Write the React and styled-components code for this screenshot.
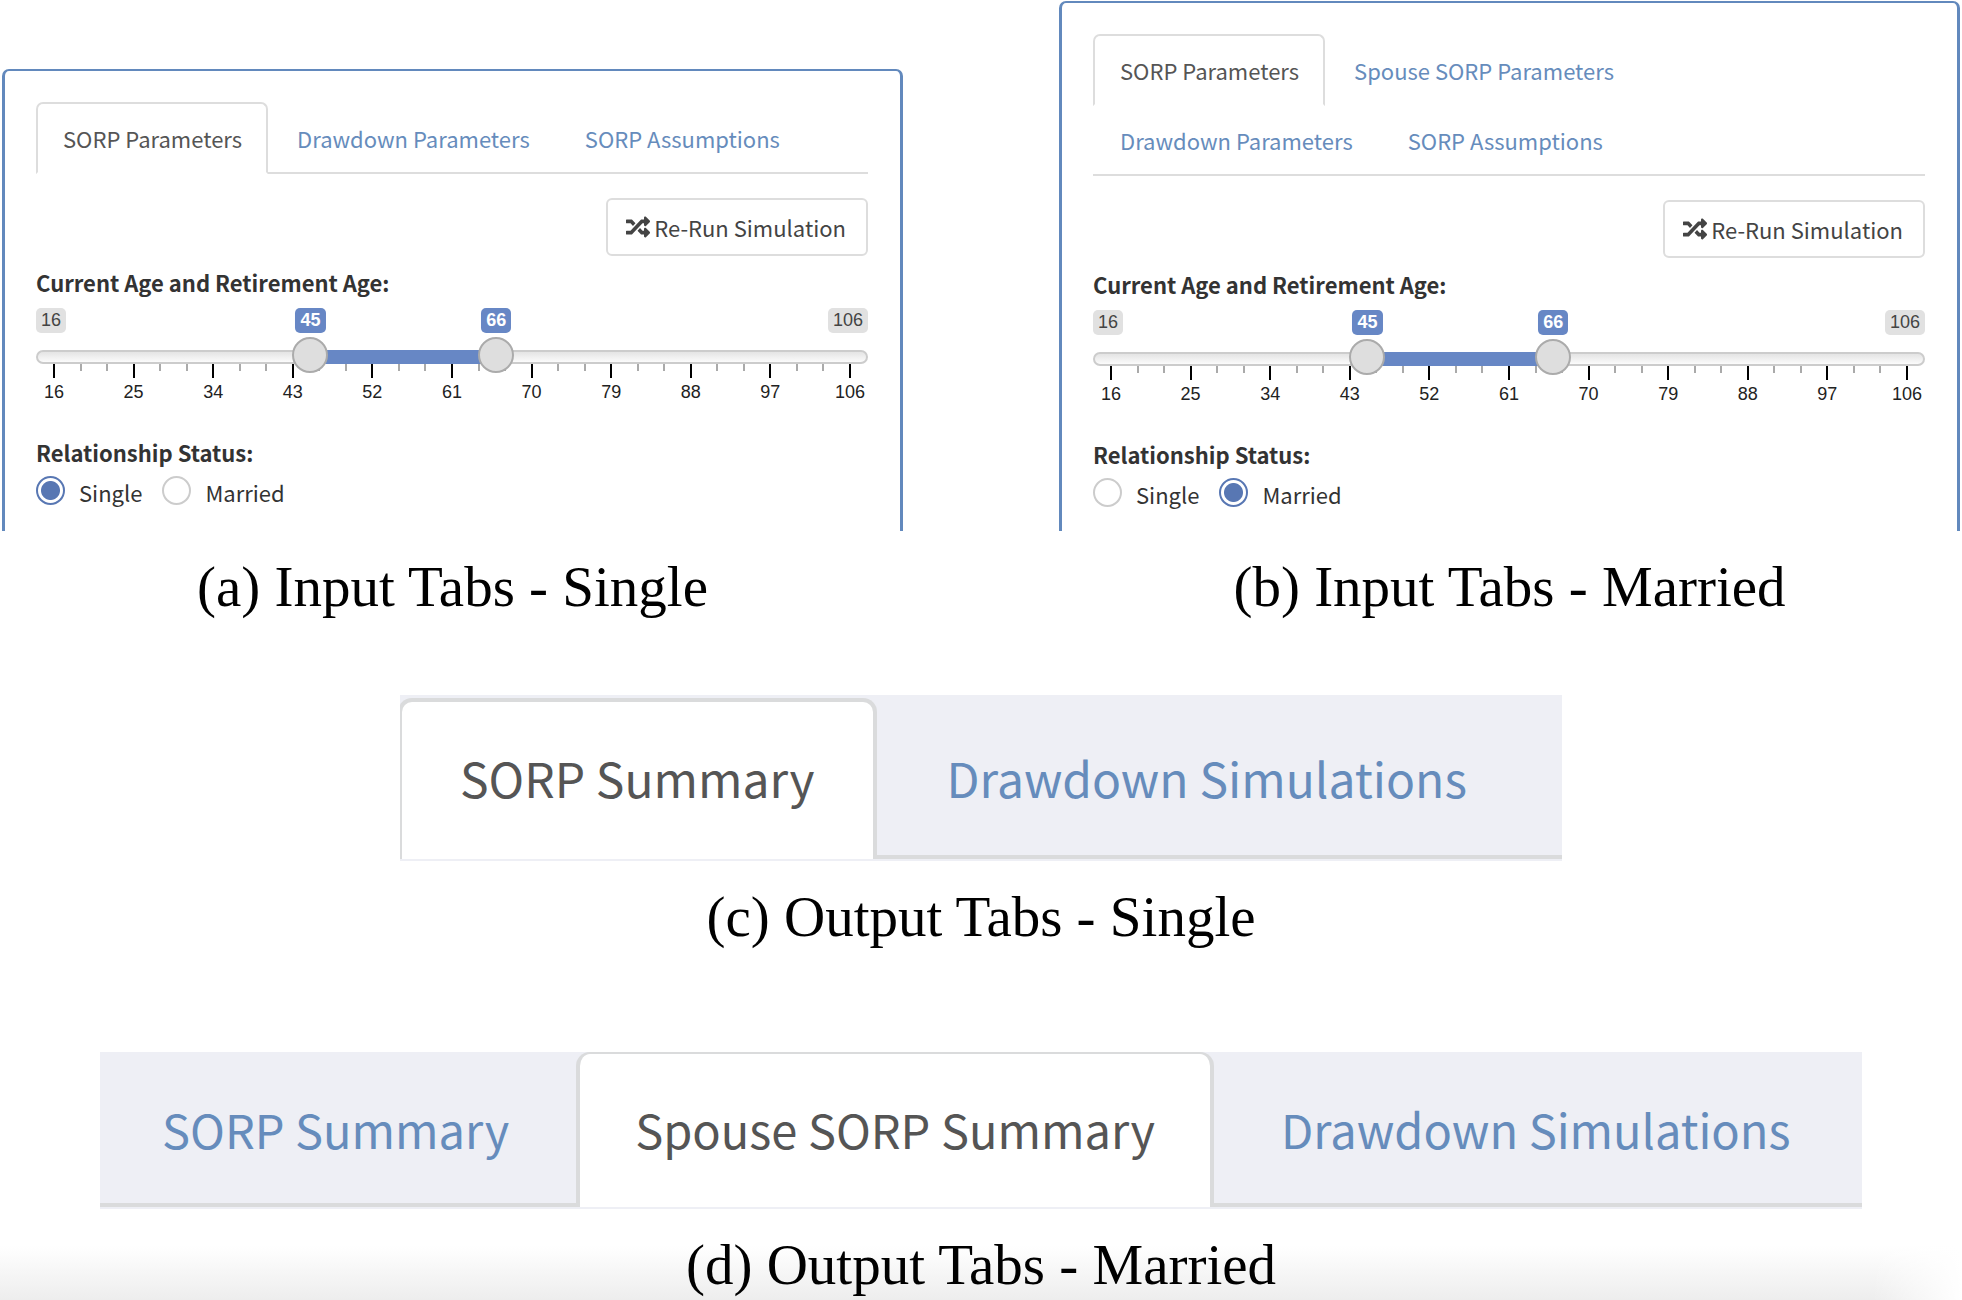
import React, { useState } from 'react'
import styled, { createGlobalStyle, css } from 'styled-components';
import { FaRandom } from 'react-icons/fa'

const MIN = 16
const MAX = 106
const LABELS = [16, 25, 34, 43, 52, 61, 70, 79, 88, 97, 106]
const TICKS = Array.from({ length: 31 }, (_, i) => i)

const percent = (age) => ((age - MIN) / (MAX - MIN)) * 100

function AgeSlider({ name }) {
  const [from, setFrom] = useState(45)
  const [to, setTo] = useState(66)

  return (
    <Field>
      <FieldTitle id={`${name}-age`}>Current Age and Retirement Age:</FieldTitle>
      <Badges>
        <Badge>{MIN}</Badge>
        <Badge>{MAX}</Badge>
        <Scale>
          <Value style={{ left: `${percent(from)}%` }}>{from}</Value>
          <Value style={{ left: `${percent(to)}%` }}>{to}</Value>
        </Scale>
      </Badges>
      <Rail>
        <Ticks>
          {TICKS.map((i) => <Tick key={i} $major={i % 3 === 0} />)}
        </Ticks>
        <Track />
        <Scale>
          <Range style={{ left: `${percent(from)}%`, width: `${percent(to) - percent(from)}%` }} />
        </Scale>
        <Thumb
          type="range" min={MIN} max={MAX} value={from}
          aria-label="Current age" aria-describedby={`${name}-age`}
          onChange={(e) => setFrom(Math.min(Number(e.target.value), to))}
        />
        <Thumb
          type="range" min={MIN} max={MAX} value={to}
          aria-label="Retirement age" aria-describedby={`${name}-age`}
          onChange={(e) => setTo(Math.max(Number(e.target.value), from))}
        />
      </Rail>
      <Numbers>
        {LABELS.map((n) => <span key={n}>{n}</span>)}
      </Numbers>
    </Field>
  )
}

function InputPanel({ name, tabs, initial }) {
  const [status, setStatus] = useState(initial)

  return (
    <Panel>
      <Tabs>
        {tabs.map((tab, i) => (
          <li key={tab}><Tab href="#" $active={i === 0}>{tab}</Tab></li>
        ))}
      </Tabs>
      <Button type="button"><FaRandom size={24} />Re-Run Simulation</Button>
      <AgeSlider name={name} />
      <Status>
        <FieldTitle as="legend">Relationship Status:</FieldTitle>
        <Options>
          {['Single', 'Married'].map((option) => (
            <label key={option}>
              <Radio
                name={`${name}-status`}
                value={option}
                checked={status === option}
                onChange={() => setStatus(option)}
              />
              {option}
            </label>
          ))}
        </Options>
      </Status>
    </Panel>
  )
}

function OutputTabs({ tabs, active, cropped }) {
  return (
    <Strip $cropped={cropped}>
      {tabs.map((tab) => (
        <BigTab key={tab} href="#" $active={tab === active} $cropped={cropped}>{tab}</BigTab>
      ))}
    </Strip>
  )
}

export default function App() {
  return (
    <Page>
      <Global />
      <Inputs>
        <Figure $drop>
          <InputPanel
            name="single"
            initial="Single"
            tabs={['SORP Parameters', 'Drawdown Parameters', 'SORP Assumptions']}
          />
          <Caption>(a) Input Tabs - Single</Caption>
        </Figure>
        <Figure>
          <InputPanel
            name="married"
            initial="Married"
            tabs={['SORP Parameters', 'Spouse SORP Parameters', 'Drawdown Parameters', 'SORP Assumptions']}
          />
          <Caption>(b) Input Tabs - Married</Caption>
        </Figure>
      </Inputs>
      <Output $side={400} $top={76}>
        <OutputTabs tabs={['SORP Summary', 'Drawdown Simulations']} active="SORP Summary" />
        <Caption>(c) Output Tabs - Single</Caption>
      </Output>
      <Output $side={100} $top={103}>
        <OutputTabs
          cropped
          tabs={['SORP Summary', 'Spouse SORP Summary', 'Drawdown Simulations']}
          active="Spouse SORP Summary"
        />
        <Caption>(d) Output Tabs - Married</Caption>
      </Output>
    </Page>
  )
}

const Global = createGlobalStyle`
  *{
    box-sizing: border-box;
  }

  body{
    margin: 0;
    background: #fff;
  }
`;
const Page = styled.main`
  min-height: 100vh;
  padding: 1px 2px 0;
  font-family: 'Noto Sans CJK SC', 'Open Sans', sans-serif;
  font-size: 22px;
  line-height: 32px;
  color: #333;
  background:
    linear-gradient(to right, transparent calc(100% - 90px), #fff),
    linear-gradient(to top, #ededed, #fff 54px);
`;
const Inputs = styled.div`
  display: grid;
  grid-template-columns: 1fr 1fr;
  gap: 156px;
`;
const Figure = styled.figure`
  display: flex;
  flex-direction: column;
  margin: ${(p) => (p.$drop ? '68px 0 0' : '0')};
`;
const Output = styled.figure`
  margin: ${(p) => p.$top}px 0 0;

  > div{
    margin: 0 ${(p) => p.$side - 2}px;
  }
`;
const Caption = styled.figcaption`
  margin-top: 24px;
  font-family: 'Liberation Serif', serif;
  font-size: 57px;
  line-height: 64px;
  text-align: center;
  color: #000;
`;
const Panel = styled.section`
  flex: 1;
  display: flex;
  flex-direction: column;
  padding: 31px 32px 21px 31px;
  border: solid #6289bd;
  border-width: 2px 3px 0;
  border-radius: 7px 7px 0 0;
`;
const Tabs = styled.ul`
  display: flex;
  flex-wrap: wrap;
  column-gap: 2px;
  margin: 0;
  padding: 0 12px 0 0;
  list-style: none;
  border-bottom: 2px solid #ddd;

  li{
    margin-bottom: -2px;
  }
`;
const Tab = styled.a`
  display: block;
  padding: 18px 24px 18px 25px;
  border: 2px solid transparent;
  border-radius: 7px 7px 0 0;
  text-decoration: none;
  color: #668cbc;

  ${(p) => p.$active && css`
    border-color: #ddd;
    border-bottom-color: #fff;
    background: #fff;
    color: #555;
  `}
`;
const Button = styled.button`
  align-self: flex-end;
  display: flex;
  align-items: center;
  gap: 4px;
  margin-top: 24px;
  padding: 11px 20px 11px 18px;
  border: 2px solid #ddd;
  border-radius: 6px;
  background: #fff;
  font: inherit;
  color: #444;
  cursor: pointer;
`;
const Field = styled.div`
  margin-top: 10px;
`;
const FieldTitle = styled.div`
  padding: 0;
  font-weight: 700;
`;
const Badges = styled.div`
  position: relative;
  display: flex;
  justify-content: space-between;
  margin-top: 10px;
`;
const Badge = styled.span`
  padding: 0 5px;
  border-radius: 5px;
  background: #e1e1e1;
  font: 18px/25px 'Liberation Sans', sans-serif;
  color: #444;
`;
// spans from the centre of the first thumb position to the last
const Scale = styled.div`
  position: absolute;
  inset: 0 18px;
`;
const Value = styled(Badge)`
  position: absolute;
  transform: translateX(-50%);
  background: #6787c5;
  font-weight: 700;
  color: #fff;
`;
const Rail = styled.div`
  position: relative;
  height: 41px;
  margin-top: 4px;
`;
const Track = styled.div`
  position: absolute;
  inset: 13px 0 auto;
  height: 14px;
  border: 2px solid #ccc;
  border-radius: 7px;
  background: linear-gradient(#e4e4e4, #fbfbfb);
`;
const Range = styled.div`
  position: absolute;
  top: 13px;
  height: 14px;
  background: #6787c5;
`;
const Thumb = styled.input`
  position: absolute;
  inset: 0 0 auto;
  width: 100%;
  height: 36px;
  margin: 0;
  appearance: none;
  background: none;
  pointer-events: none;

  &::-webkit-slider-thumb{
    appearance: none;
    width: 36px;
    height: 36px;
    border: 2px solid #ababab;
    border-radius: 50%;
    background: #dedede;
    pointer-events: auto;
    cursor: pointer;
  }
`;
const Ticks = styled.div`
  position: absolute;
  inset: 27px 17px 0;
  display: flex;
  justify-content: space-between;
  align-items: flex-start;
`;
const Tick = styled.span`
  width: 2px;
  height: ${(p) => (p.$major ? 14 : 7)}px;
  background: ${(p) => (p.$major ? '#000' : '#aaa')};
`;
const Numbers = styled.div`
  display: flex;
  justify-content: space-between;
  margin-top: 4px;
  font: 18px/20px 'Liberation Sans', sans-serif;
  color: #222;

  span{
    width: 36px;
    text-align: center;
  }
`;
const Status = styled.fieldset`
  margin: 34px 0 0;
  padding: 0;
  border: 0;
`;
const Options = styled.div`
  display: flex;
  gap: 20px;
  margin-top: 8px;

  label{
    display: flex;
    gap: 14px;
  }
`;
const Radio = styled.input.attrs({ type: 'radio' })`
  appearance: none;
  width: 29px;
  height: 29px;
  margin: 0;
  border: 2px solid #ccc;
  border-radius: 50%;
  background: #fff;

  &:checked{
    border-color: #5877b3;
    background: radial-gradient(circle, #5877b3 9px, #fff 10px);
  }
`;
const Strip = styled.div`
  display: flex;
  gap: 8px;
  padding-top: ${(p) => (p.$cropped ? 0 : 3)}px;
  border-bottom: 2px solid #eeeff5;
  background: linear-gradient(to top, #dadbdc 4px, #eeeff5 4px);
  overflow: hidden;

  a:first-child{
    margin-left: ${(p) => (p.$cropped ? 3 : -2)}px;
  }
`;
const BigTab = styled.a`
  padding: ${(p) => (p.$cropped ? '43px 55px 46px' : '43px 58px 50px')};
  border: 4px solid transparent;
  border-top-width: ${(p) => (p.$cropped ? 2 : 4)}px;
  border-bottom: 0;
  border-radius: 14px 14px 0 0;
  font-size: ${(p) => (p.$cropped ? 47 : 48)}px;
  line-height: 64px;
  white-space: nowrap;
  text-decoration: none;
  color: #668cbc;

  ${(p) => p.$active && css`
    border-color: #dadbdc;
    background: #fff;
    color: #555;
  `}
`;
